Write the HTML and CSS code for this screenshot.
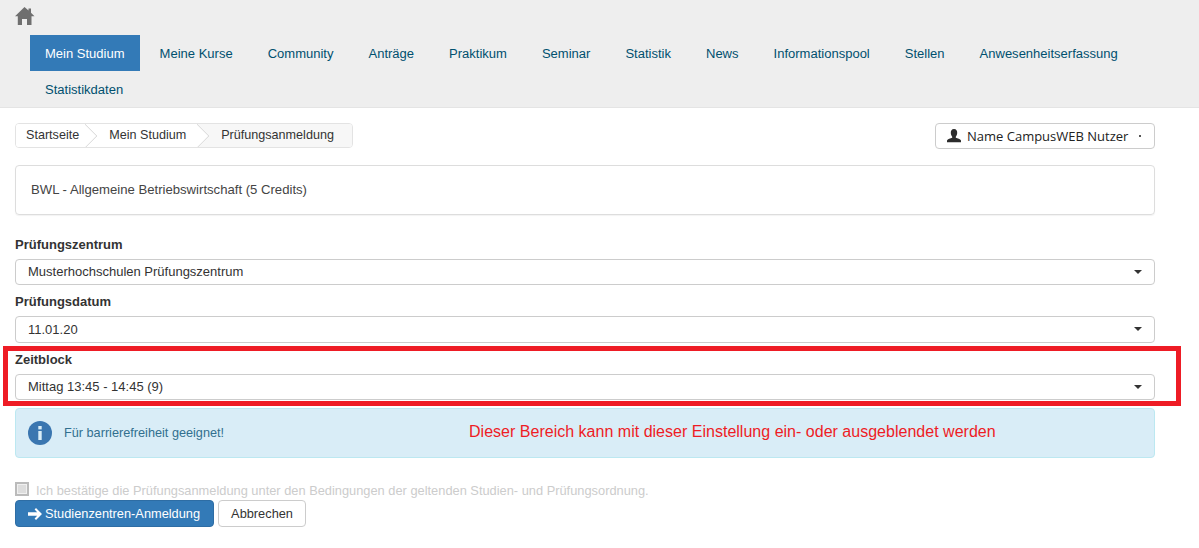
FILE: index.html
```html
<!DOCTYPE html>
<html lang="de">
<head>
<meta charset="utf-8">
<title>Prüfungsanmeldung</title>
<link rel="stylesheet" href="styles.css">
</head>
<body>
<header class="top">
  <a class="home" href="#"><svg width="20" height="18" viewBox="0 0 20 18"><path fill="#6f6f6f" d="M9.5 0 L13.5 3.6 V1.5 H16 V5.8 L19.5 9.3 H16.5 V18 H12 V12 H7 V18 H2.8 V9.3 H0 Z"/></svg></a>
  <nav class="nav">
    <a class="nav-item active" href="#">Mein Studium</a>
    <a class="nav-item" href="#">Meine Kurse</a>
    <a class="nav-item" href="#">Community</a>
    <a class="nav-item" href="#">Anträge</a>
    <a class="nav-item" href="#">Praktikum</a>
    <a class="nav-item" href="#">Seminar</a>
    <a class="nav-item" href="#">Statistik</a>
    <a class="nav-item" href="#">News</a>
    <a class="nav-item" href="#">Informationspool</a>
    <a class="nav-item" href="#">Stellen</a>
    <a class="nav-item" href="#">Anwesenheitserfassung</a>
    <a class="nav-item" href="#">Statistikdaten</a>
  </nav>
</header>
<main class="content">
  <div class="crumb-row">
    <div class="crumbs">
      <a class="crumb" href="#">Startseite</a>
      <a class="crumb" href="#">Mein Studium</a>
      <span class="crumb current">Prüfungsanmeldung</span>
    </div>
    <button class="user" type="button">
      <svg width="14" height="14" viewBox="0 0 14 14"><path fill="#2b2b2b" d="M7 0 C9.3 0 10.4 1.7 10.2 4 C10.1 5.6 9.4 7 8.8 7.7 V8.8 C10.5 9.5 13.4 10 14 11.6 V13.2 H0 V11.6 C.6 10 3.5 9.5 5.2 8.8 V7.7 C4.6 7 3.9 5.6 3.8 4 C3.6 1.7 4.7 0 7 0 Z"/></svg>
      <span class="user-name">Name CampusWEB Nutzer</span>
      <span class="user-caret"></span>
    </button>
  </div>
  <div class="panel">BWL - Allgemeine Betriebswirtschaft (5 Credits)</div>
  <div class="field">
    <label class="label">Prüfungszentrum</label>
    <div class="select">Musterhochschulen Prüfungszentrum<i class="caret"></i></div>
  </div>
  <div class="field">
    <label class="label">Prüfungsdatum</label>
    <div class="select tall">11.01.20<i class="caret"></i></div>
  </div>
  <div class="field">
    <label class="label">Zeitblock</label>
    <div class="select">Mittag 13:45 - 14:45 (9)<i class="caret"></i></div>
  </div>
  <div class="alert">
    <svg width="24" height="24" viewBox="0 0 24 24"><circle cx="12" cy="12" r="12" fill="#3a76b0"/><rect x="10.3" y="10" width="3.4" height="9" fill="#d9edf7"/><rect x="10.3" y="5" width="3.4" height="3.4" fill="#d9edf7"/></svg>
    <span class="alert-text">Für barrierefreiheit geeignet!</span>
    <span class="note">Dieser Bereich kann mit dieser Einstellung ein- oder ausgeblendet werden</span>
  </div>
  <div class="confirm">
    <span class="check"></span>
    <span class="confirm-text">Ich bestätige die Prüfungsanmeldung unter den Bedingungen der geltenden Studien- und Prüfungsordnung.</span>
  </div>
  <div class="actions">
    <button class="btn primary" type="button"><svg width="14" height="12" viewBox="0 0 14 12"><path fill="#fff" d="M8 0 L14 6 L8 12 L6.6 10.6 L9.2 7.8 H0 V4.2 H9.2 L6.6 1.4 Z"/></svg>Studienzentren-Anmeldung</button>
    <button class="btn" type="button">Abbrechen</button>
  </div>
</main>
<div class="highlight"></div>
</body>
</html>
```
FILE: styles.css
```css
* { box-sizing: border-box; }
html, body { margin: 0; padding: 0; }
body {
  position: relative;
  height: 548px;
  overflow: hidden;
  background: #fff;
  color: #333;
  font-family: "Liberation Sans", Arial, sans-serif;
  font-size: 13px;
}
a { text-decoration: none; color: inherit; }
.top {
  height: 108px;
  background: #eee;
  border-bottom: 1px solid #e4e4e4;
  padding: 7px 0 0 15px;
}
.home { display: block; height: 28px; }
.home svg { display: block; }
.nav {
  display: flex;
  flex-wrap: wrap;
  column-gap: 5px;
  margin-left: 15px;
  width: 1140px;
}
.nav-item {
  height: 36px;
  line-height: 37px;
  padding: 0 15px;
  color: #00506e;
  font-size: 13.03px;
}
.nav-item.active { background: #337ab7; color: #fff; }
.content { padding: 15px 44px 0 15px; }
.crumb-row {
  display: flex;
  justify-content: space-between;
  align-items: flex-start;
  height: 42px;
}
.crumbs {
  display: flex;
  height: 25px;
  border: 1px solid #e3e3e3;
  border-radius: 4px;
  overflow: hidden;
  font-size: 12.6px;
}
.crumb {
  position: relative;
  line-height: 23px;
  padding: 0 6px 0 10px;
  background: #fff;
  color: #333;
}
.crumb + .crumb { padding-left: 24px; padding-right: 11px; }
.crumb.current { background: #f7f7f7; padding-right: 18px; }
.crumb:not(.current)::after {
  content: "";
  position: absolute;
  z-index: 1;
  top: 3px;
  right: -8.5px;
  width: 17px;
  height: 17px;
  background: #fff;
  border-top: 1px solid #dcdcdc;
  border-right: 1px solid #dcdcdc;
  transform: rotate(45deg);
  clip-path: polygon(0 0, 100% 0, 100% 100%);
}
.user {
  display: flex;
  align-items: center;
  width: 220px;
  height: 26px;
  padding: 0 0 0 11px;
  background: #fff;
  border: 1px solid #ccc;
  border-radius: 4px;
  color: #222;
  font-family: "Open Sans", "Noto Sans", sans-serif;
  font-size: 13px;
}
.user-name { margin-left: 6px; white-space: nowrap; }
.user-caret {
  margin-left: 11px;
  width: 2px;
  height: 2px;
  background: #555;
}
.panel {
  height: 50px;
  line-height: 48px;
  padding-left: 15px;
  border: 1px solid #ddd;
  border-radius: 4px;
  box-shadow: 0 1px 1px rgba(0,0,0,.05);
  margin-bottom: 20px;
  font-size: 13.14px;
  color: #444;
}
.field { padding-top: 1px; margin-bottom: 7px; }
.label {
  display: block;
  height: 16px;
  line-height: 18px;
  margin-bottom: 7px;
  font-weight: bold;
  color: #333;
}
.select {
  position: relative;
  height: 26px;
  line-height: 24px;
  padding-left: 12px;
  border: 1px solid #ccc;
  border-radius: 4px;
  background: #fff;
}
.select.tall { height: 27px; line-height: 25px; }
.caret {
  position: absolute;
  right: 12px;
  top: 10px;
  border-top: 4px solid #333;
  border-left: 4px solid transparent;
  border-right: 4px solid transparent;
}
.alert {
  position: relative;
  display: flex;
  align-items: center;
  height: 50px;
  margin-top: 8px;
  padding-left: 12px;
  background: #d9edf7;
  border: 1px solid #bce8f1;
  border-radius: 4px;
  color: #31708f;
  font-size: 12.7px;
}
.alert-text { margin-left: 12px; }
.note {
  position: absolute;
  left: 453px;
  top: 13px;
  color: #ee1c25;
  font-size: 16.05px;
}
.confirm {
  display: flex;
  align-items: center;
  gap: 7px;
  height: 18px;
  margin-top: 22px;
  color: #ccc;
  font-size: 12.84px;
}
.confirm-text { padding-top: 2px; }
.check {
  flex: none;
  width: 14px;
  height: 14px;
  background: #ddd;
  border: 2px solid #bbb;
  box-shadow: inset 0 0 0 1px #f0f0f0;
}
.actions { display: flex; gap: 4px; margin-top: 2px; }
.btn {
  display: flex;
  align-items: center;
  height: 27px;
  padding: 0 12px;
  background: #fff;
  border: 1px solid #ccc;
  border-radius: 4px;
  color: #333;
  font-family: "Liberation Sans", Arial, sans-serif;
  font-size: 12.8px;
}
.btn.primary {
  gap: 3px;
  padding-right: 13px;
  background: #337ab7;
  border-color: #2e6da4;
  color: #fff;
}
.highlight {
  position: absolute;
  left: 3px;
  top: 346px;
  width: 1178px;
  height: 60px;
  border: 5px solid #ee1c25;
  pointer-events: none;
}
```
